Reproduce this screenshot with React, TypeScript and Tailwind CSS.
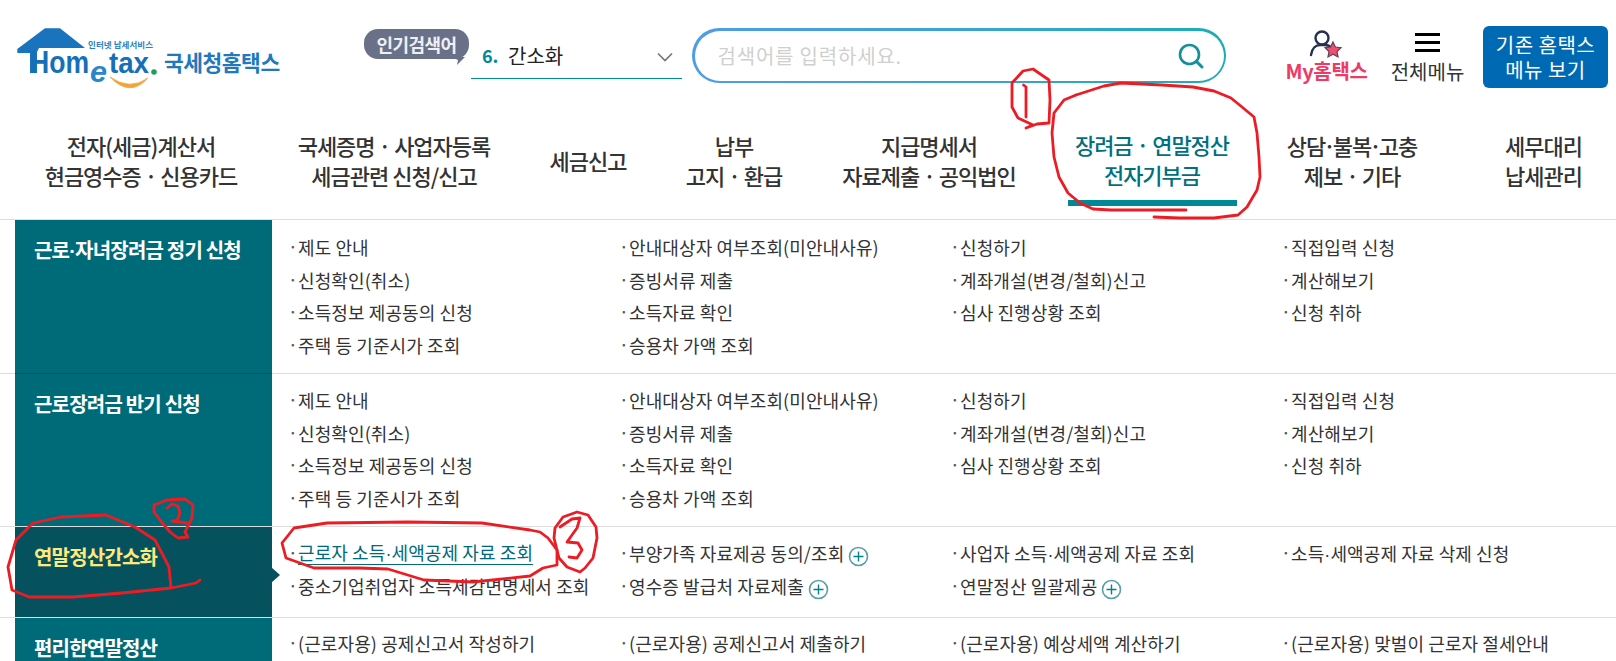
const font = { fontFamily: '"Noto Sans CJK KR", "Noto Sans", sans-serif' };
const latin = { fontFamily: '"Liberation Sans", sans-serif' };

const navItems = [
  { lines: ["전자(세금)계산서", "현금영수증 · 신용카드"], w: "w-[252px]" },
  { lines: ["국세증명 · 사업자등록", "세금관련 신청/신고"], w: "w-[254px]" },
  { lines: ["세금신고"], w: "w-[134px]" },
  { lines: ["납부", "고지 · 환급"], w: "w-[158px]" },
  { lines: ["지급명세서", "자료제출 · 공익법인"], w: "w-[232px]" },
  { lines: ["장려금 · 연말정산", "전자기부금"], w: "w-[214px]", active: true },
  { lines: ["상담 · 불복 · 고충", "제보 · 기타"], w: "w-[186px]" },
  { lines: ["세무대리", "납세관리"], w: "w-[171px] pl-[26px]" },
];

type Link = { t: string; plus?: boolean; active?: boolean };
const common: Link[] = [
  { t: "제도 안내" }, { t: "안내대상자 여부조회(미안내사유)" }, { t: "신청하기" }, { t: "직접입력 신청" },
  { t: "신청확인(취소)" }, { t: "증빙서류 제출" }, { t: "계좌개설(변경/철회)신고" }, { t: "계산해보기" },
  { t: "소득정보 제공동의 신청" }, { t: "소득자료 확인" }, { t: "심사 진행상황 조회" }, { t: "신청 취하" },
  { t: "주택 등 기준시가 조회" }, { t: "승용차 가액 조회" },
];

const rows: { title: string; h: string; pt: string; links: Link[]; active?: boolean; border: string }[] = [
  { title: "근로·자녀장려금 정기 신청", h: "h-[153px]", pt: "pt-[11px]", links: common, border: "border-[#dcdcdc]" },
  { title: "근로장려금 반기 신청", h: "h-[152px]", pt: "pt-[10px]", links: common, border: "border-[#dcdcdc]" },
  {
    title: "연말정산간소화", h: "h-[90px]", pt: "pt-[10px]", active: true, border: "border-[#dcdcdc]",
    links: [
      { t: "근로자 소득·세액공제 자료 조회", active: true },
      { t: "부양가족 자료제공 동의/조회", plus: true },
      { t: "사업자 소득·세액공제 자료 조회" },
      { t: "소득·세액공제 자료 삭제 신청" },
      { t: "중소기업취업자 소득세감면명세서 조회" },
      { t: "영수증 발급처 자료제출", plus: true },
      { t: "연말정산 일괄제공", plus: true },
    ],
  },
  {
    title: "편리한연말정산", h: "h-[60px]", pt: "pt-[9px]", border: "border-transparent",
    links: [
      { t: "(근로자용) 공제신고서 작성하기" },
      { t: "(근로자용) 공제신고서 제출하기" },
      { t: "(근로자용) 예상세액 계산하기" },
      { t: "(근로자용) 맞벌이 근로자 절세안내" },
    ],
  },
];

function Dotted({ t }: { t: string }) {
  const parts = t.split("·");
  return (
    <>
      {parts.map((p, i) => (
        <span key={i}>
          {i > 0 && <span style={latin}>·</span>}
          {p}
        </span>
      ))}
    </>
  );
}

function Plus() {
  return (
    <svg width="21" height="21" viewBox="0 0 21 21" className="ml-[4px] mt-[9px] shrink-0">
      <circle cx="10.5" cy="10.5" r="9" fill="#fff" stroke="#5a9fa8" strokeWidth="1.6" />
      <path d="M10.5 5.5v10M5.5 10.5h10" stroke="#00838f" strokeWidth="1.4" />
    </svg>
  );
}

function Logo() {
  return (
    <svg width="270" height="66" viewBox="0 0 270 66" className="shrink-0">
      <path d="M0.3 21 L28 0.3 L43 0.3 L68 20 L22 20 L20 24 L20 45 L13 45 L13 25 L0.3 25 Z" fill="#1a74bd" />
      <text x="71" y="19.5" fontSize="8.5" fontWeight="700" fill="#2d7fc4" textLength="65" style={font}>인터넷 납세서비스</text>
      <text x="13" y="45" fontSize="32" fontWeight="700" fill="#1670b8" textLength="59" lengthAdjust="spacingAndGlyphs" style={latin}>Hom</text>
      <text x="73" y="54" fontSize="30" fontStyle="italic" fontWeight="700" fill="#2a86c8" textLength="17" lengthAdjust="spacingAndGlyphs" style={latin}>e</text>
      <text x="92" y="45" fontSize="30" fontWeight="700" fill="#1670b8" textLength="40" lengthAdjust="spacingAndGlyphs" style={latin}>tax</text>
      <circle cx="137" cy="44" r="2.8" fill="#1ea05a" />
      <path d="M93 49 Q113 70 131 50 Q113 63 93 49 Z" fill="#f2a33a" stroke="#f2a33a" strokeWidth="0.8" />
      <text x="147" y="43" fontSize="21.5" fontWeight="700" fill="#2278bd" letterSpacing="-0.5" style={font}>국세청홈택스</text>
    </svg>
  );
}

function Header() {
  return (
    <header className="flex h-[123px] items-start">
      <div className="ml-[17px] mt-[28px] w-[347px]"><Logo /></div>
      <div className="relative mt-[29px] flex h-[30px] w-[105px] items-center justify-center rounded-[14px] bg-[#6b7089] text-[18px] font-bold tracking-[-0.6px] text-[#eef0f4]">
        인기검색어
        <svg width="14" height="8" viewBox="0 0 14 8" className="absolute bottom-[-6px] right-[4px]"><path d="M0 0 L14 0 L6 8 L7 3 Z" fill="#6b7089" /></svg>
      </div>
      <div className="ml-[2px] mt-[33px] flex h-[46px] w-[211px] items-center border-b-[1px] border-[#00899a] pl-[11px] pr-[5px] text-[20px] text-[#222]">
        <span className="w-[26px] text-[18px] font-bold text-[#00899a]">6.</span>
        <span>간소화</span>
        <svg width="18" height="10" viewBox="0 0 18 10" className="ml-auto mr-[3px] mt-[3px]"><path d="M2 1.5 L9 8.5 L16 1.5" fill="none" stroke="#777" strokeWidth="1.7" /></svg>
      </div>
      <div className="ml-[10px] mt-[28px] h-[55px] w-[534px] rounded-full bg-gradient-to-r from-[#4f9ce6] to-[#1aabb8] p-[2.5px]">
        <div className="flex h-full items-center rounded-full bg-white pl-[23px] pr-[19px]">
          <span className="text-[20px] tracking-[0.8px] text-[#cfcfcf]">검색어를 입력하세요.</span>
          <svg width="28" height="28" viewBox="0 0 28 28" className="ml-auto">
            <circle cx="12.5" cy="12.5" r="9.5" fill="none" stroke="#14909c" strokeWidth="2.6" />
            <path d="M19.5 19.5 L25 25" stroke="#14909c" strokeWidth="3" strokeLinecap="round" />
          </svg>
        </div>
      </div>
      <div className="ml-[59px] mt-[29px] flex w-[83px] flex-col items-center">
        <svg width="34" height="30" viewBox="0 0 34 30" className="ml-[-1px]">
          <circle cx="13" cy="9" r="6.5" fill="none" stroke="#27304f" strokeWidth="2.4" />
          <path d="M2 26 C3 19 7 16 11 16 L16 16 C19 16 21 17 23 19" fill="none" stroke="#27304f" strokeWidth="2.4" strokeLinecap="round" />
          <path d="M24 13 L26.4 18 L32 18.7 L28 22.5 L29 28 L24 25.3 L19 28 L20 22.5 L16 18.7 L21.6 18 Z" fill="#f0506f" stroke="#5d4458" strokeWidth="1.2" />
        </svg>
        <span className="mt-[-1px] whitespace-nowrap text-[20px] font-bold leading-[26px] tracking-[-0.3px] text-[#ee3a64]">My홈택스</span>
      </div>
      <div className="ml-[23px] mt-[33px] flex w-[73px] flex-col items-center">
        <div className="flex h-[19px] w-[25px] flex-col justify-between">
          <div className="h-[3px] bg-black" />
          <div className="h-[3px] bg-black" />
          <div className="h-[3px] bg-black" />
        </div>
        <span className="mt-[7px] whitespace-nowrap text-[20px] leading-[26px] text-[#333]">전체메뉴</span>
      </div>
      <div className="ml-[19px] mt-[26px] flex h-[62px] w-[125px] items-center justify-center rounded-[6px] bg-[#0069b4] text-center text-[20px] leading-[25px] tracking-[0.5px] text-white">
        기존 홈택스<br />메뉴 보기
      </div>
    </header>
  );
}

function Nav() {
  return (
    <nav className="flex h-[97px] border-b-[1px] border-[#dddddd] pb-[13px] pl-[15px]">
      {navItems.map((n) => (
        <div key={n.lines[0]} className={`flex shrink-0 justify-center ${n.w}`}>
          <div className={`flex h-[83px] flex-col items-center justify-center whitespace-nowrap text-[22px] font-medium leading-[30px] tracking-[-1px] ${n.active ? "w-[169px] border-b-[6px] border-[#008896] pb-[6px] text-[#00707e]" : "pb-[10px] text-[#333]"}`}>
            {n.lines.map((l) => (
              <div key={l} className={l === "상담 · 불복 · 고충" ? "[word-spacing:-6px]" : ""}>{l}</div>
            ))}
          </div>
        </div>
      ))}
    </nav>
  );
}

function Row({ r }: { r: (typeof rows)[number] }) {
  return (
    <section className={`flex ${r.h} box-content border-b-[1px] ${r.border}`}>
      <div className={`relative ml-[15px] w-[257px] shrink-0 pl-[19px] pt-[13px] text-[20px] font-bold leading-[34px] tracking-[-0.8px] ${r.active ? "bg-[#05525e] text-[#ffe97a]" : "bg-[#006b78] text-white"} ${r.title === "근로·자녀장려금 정기 신청" ? "-mb-px border-b border-[#05525e]" : ""}`}>
        <Dotted t={r.title} />
        {r.active && (
          <svg width="10" height="16" viewBox="0 0 10 16" className="absolute right-[-9px] top-[40px]"><path d="M0 0 L9 8 L0 16 Z" fill="#05525e" /></svg>
        )}
      </div>
      <ul className={`grid flex-1 grid-cols-[331px_331px_331px_331px] content-start pl-[17px] ${r.pt} text-[18px] text-[#333]`}>
        {r.links.map((l, i) => (
          <li key={i} className="flex h-[32.5px] whitespace-nowrap leading-[32.5px] tracking-[0.1px]">
            <span className="w-[9px] shrink-0 text-[13px] font-bold text-[#555]">·</span>
            {l.active ? (
              <span className="h-[28px] border-b border-[#00697a] leading-[30px] text-[#00697a]"><Dotted t={l.t} /></span>
            ) : (
              <span><Dotted t={l.t} /></span>
            )}
            {l.plus && <Plus />}
          </li>
        ))}
      </ul>
    </section>
  );
}

function Annotations() {
  const paths = [
    "M1076 95 L1104 86 L1121 83 L1162 85 L1193 87 L1214 91 L1231 98 L1242 107 L1254 117 L1257 133 L1259 157 L1260 177 L1257 190 L1247 207 L1238 215 L1214 218 L1179 218 L1154 217",
    "M1076 95 L1064 100 L1054 113 L1052 133 L1054 157 L1059 177 L1068 193 L1080 203 L1093 209 L1111 210 L1146 210 L1186 210",
    "M1012 83 L1023 71 L1033 69 L1049 80 L1050 100 L1049 123 L1037 124 L1026 128 L1033 125 L1018 118 L1012 107 Z",
    "M1023.5 85 L1026 87 L1026 117",
    "M200 580 L196 583 L171 588 L122 593 L73 597 L29 597 L12 590 L8 567 L16 540 L33 523 L61 517 L106 515 L135 527 L155 540 L169 567 L171 588",
    "M154 505 L167 500 L185 499 L193 505 L192 518 L185 532 L188 537 L178 538 L170 532 L160 520 L154 512 Z",
    "M167 508 L172 504 L178 506 L180 513 L177 521 L172 521 L180 522 L187 523",
    "M282 543 L294 528 L327 523 L408 522 L482 523 L530 530 L540 532 L548 538 L557 550 L557 565 L543 568 L530 576 L473 582 L424 580 L388 569 L359 568 L314 568 L286 558 Z",
    "M554 538 L555 528 L563 517 L577 512 L588 515 L596 527 L597 538 L593 558 L585 568 L580 572 L567 567 L559 558 L554 538",
    "M560 527 L572 519 L580 518 L577 528 L567 542 L578 543 L582 550 L577 558 L569 557",
  ];
  return (
    <svg width="1616" height="661" viewBox="0 0 1616 661" className="pointer-events-none absolute left-0 top-0">
      {paths.map((d) => (
        <path key={d} d={d} fill="none" stroke="#ed1c24" strokeWidth="2.8" strokeLinejoin="round" strokeLinecap="round" />
      ))}
    </svg>
  );
}

export default function App() {
  return (
    <div className="relative h-[661px] w-[1616px] overflow-hidden bg-white" style={font}>
      <Header />
      <Nav />
      {rows.map((r) => <Row key={r.title} r={r} />)}
      <Annotations />
    </div>
  );
}
